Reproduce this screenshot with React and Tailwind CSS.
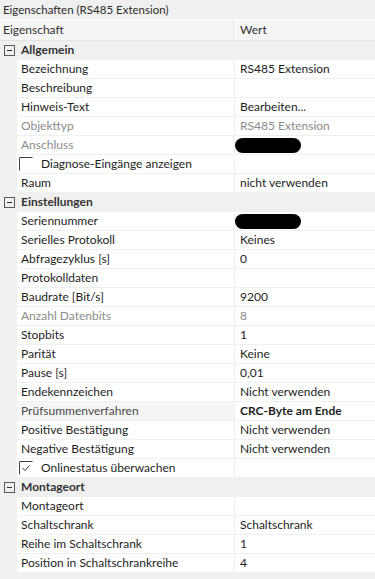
import React from "react";

const rows = [
  { g: "Allgemein" },
  { n: "Bezeichnung", v: "RS485 Extension" },
  { n: "Beschreibung", v: "" },
  { n: "Hinweis-Text", v: "Bearbeiten..." },
  { n: "Objekttyp", v: "RS485 Extension", dis: true },
  { n: "Anschluss", blob: true, dis: true },
  { n: "Diagnose-Eingänge anzeigen", cb: false },
  { n: "Raum", v: "nicht verwenden" },
  { g: "Einstellungen" },
  { n: "Seriennummer", blob: true },
  { n: "Serielles Protokoll", v: "Keines" },
  { n: "Abfragezyklus [s]", v: "0" },
  { n: "Protokolldaten", v: "" },
  { n: "Baudrate [Bit/s]", v: "9200" },
  { n: "Anzahl Datenbits", v: "8", dis: true },
  { n: "Stopbits", v: "1" },
  { n: "Parität", v: "Keine" },
  { n: "Pause [s]", v: "0,01" },
  { n: "Endekennzeichen", v: "Nicht verwenden" },
  { n: "Prüfsummenverfahren", v: "CRC-Byte am Ende", sel: true },
  { n: "Positive Bestätigung", v: "Nicht verwenden" },
  { n: "Negative Bestätigung", v: "Nicht verwenden" },
  { n: "Onlinestatus überwachen", cb: true },
  { g: "Montageort" },
  { n: "Montageort", v: "" },
  { n: "Schaltschrank", v: "Schaltschrank" },
  { n: "Reihe im Schaltschrank", v: "1" },
  { n: "Position in Schaltschrankreihe", v: "4" },
];

function Minus() {
  return (
    <svg width="11" height="11" viewBox="0 0 11 11" className="block">
      <rect x="0.5" y="0.5" width="10" height="10" fill="none" stroke="#5a5a5a" />
      <line x1="3" y1="5.5" x2="8" y2="5.5" stroke="#2a2a2a" />
    </svg>
  );
}

function Check({ on }) {
  return (
    <svg width="14" height="14" viewBox="0 0 14 14" className="block">
      <path d="M0.5 13.5 V0.5 H13.5" fill="none" stroke="#444" />
      {on && <path d="M3.5 7 L6 9.5 L10.5 4.5" fill="none" stroke="#333" strokeWidth="1" />}
    </svg>
  );
}

export default function App() {
  return (
    <div className="w-[375px] h-[579px] overflow-hidden bg-[#f0f0f0] text-[12px] text-[#1e1e1e] font-['Lato','Noto_Sans',sans-serif]">
      <div className="h-[19px] flex items-center pl-[3px] text-[11.5px] text-[#2b2b2b] leading-none">
        Eigenschaften (RS485 Extension)
      </div>
      <div className="h-[22px] flex border-t border-white border-b border-b-[#e3e3e3] bg-[#f5f5f5] text-[#333]">
        <div className="w-[234px] border-r border-r-[#e3e3e3] flex items-center pl-[3px]">Eigenschaft</div>
        <div className="border-l border-white flex items-center pl-[5px]">Wert</div>
      </div>
      {rows.map((r, i) =>
        r.g ? (
          <div key={i} className="h-[19px] flex items-center border-b border-[#f0f0f0] bg-[#f0f0f0]">
            <div className="w-[17px] flex justify-center pl-[1px]">
              <Minus />
            </div>
            <div className="pl-[4px] font-bold text-[#333]">{r.g}</div>
          </div>
        ) : (
          <div key={i} className="h-[19px] flex">
            <div className="w-[17px] shrink-0 bg-[#f0f0f0]" />
            <div
              className={`w-[217px] shrink-0 flex items-center border-b border-[#f0f0f0] overflow-hidden whitespace-nowrap ${
                r.sel ? "bg-[#f5f5f5] text-[#4a4a4a]" : "bg-white"
              } ${r.dis ? "text-[#8c8c8c]" : ""} ${r.cb !== undefined ? "pl-[2px]" : "pl-[4px]"}`}
            >
              {r.cb !== undefined ? (
                <>
                  <Check on={r.cb} />
                  <span className="pl-[8px]">{r.n}</span>
                </>
              ) : (
                r.n
              )}
            </div>
            <div
              className={`flex-1 flex items-center pl-[5px] border-b border-l border-[#f0f0f0] bg-white whitespace-nowrap ${
                r.dis ? "text-[#8c8c8c]" : ""
              } ${r.sel ? "font-bold" : ""}`}
            >
              {r.blob ? <div className="w-[66px] h-[15px] rounded-full bg-black -ml-[5px]" /> : r.v}
            </div>
          </div>
        )
      )}
    </div>
  );
}
